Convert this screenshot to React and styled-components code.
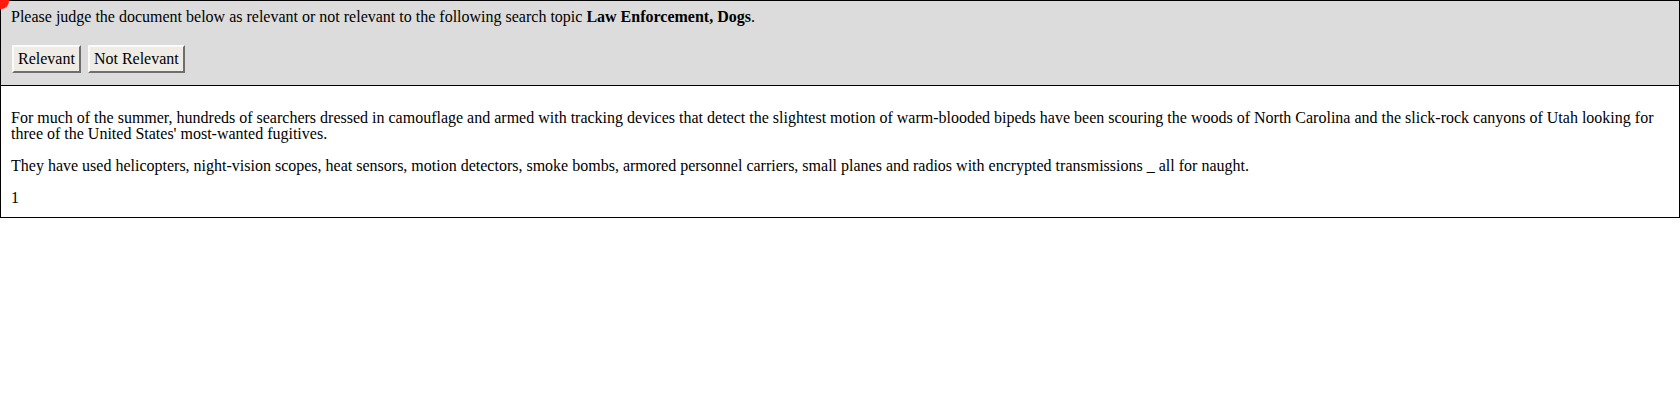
import React from "react";
import styled, { createGlobalStyle } from "styled-components";

const GlobalStyle = createGlobalStyle`
  html, body {
    margin: 0;
    padding: 0;
    background: #ffffff;
  }
  body {
    font-family: "Liberation Serif", "Times New Roman", serif;
    font-size: 16px;
    line-height: 16px;
    color: #000000;
  }
`;

const Frame = styled.div`
  position: relative;
  border: 1px solid #000;
  display: flex;
  flex-direction: column;
`;

const Marker = styled.span`
  position: absolute;
  top: -8px;
  left: -8px;
  width: 16px;
  height: 16px;
  border-radius: 50%;
  background: #ff1a0e;
`;

const Header = styled.div`
  background: #dcdcdc;
  border-bottom: 1px solid #000;
  padding: 8px 10px 12px;
  display: flex;
  flex-direction: column;
  gap: 20px;
`;

const Prompt = styled.p`
  margin: 0;
`;

const Actions = styled.div`
  display: flex;
  gap: 7px;
  padding-left: 1px;
`;

const JudgeButton = styled.button`
  font-family: inherit;
  font-size: 16px;
  line-height: 16px;
  color: #000;
  background: #efece6;
  border: 2px solid;
  border-color: #fbfaf8 #6e6e6e #6e6e6e #fbfaf8;
  padding: 4px ${(p) => p.$pad}px;
  margin: 0;
  cursor: pointer;
`;

const Body = styled.div`
  padding: 24px 10px 11px;
  display: flex;
  flex-direction: column;
  gap: 16px;
`;

const Para = styled.p`
  margin: 0;
`;

const App = () => (
  <>
    <GlobalStyle />
    <Frame>
      <Marker />
      <Header>
        <Prompt>
          Please judge the document below as relevant or not relevant to the
          following search topic <b>Law Enforcement, Dogs</b>.
        </Prompt>
        <Actions>
          <JudgeButton $pad={4}>Relevant</JudgeButton>
          <JudgeButton $pad={4}>Not Relevant</JudgeButton>
        </Actions>
      </Header>
      <Body>
        <Para>
          For much of the summer, hundreds of searchers dressed in camouflage
          and armed with tracking devices that detect the slightest motion of
          warm-blooded bipeds have been scouring the woods of North Carolina
          and the slick-rock canyons of Utah looking for three of the United
          States' most-wanted fugitives.
        </Para>
        <Para>
          They have used helicopters, night-vision scopes, heat sensors, motion
          detectors, smoke bombs, armored personnel carriers, small planes and
          radios with encrypted transmissions _ all for naught.
        </Para>
        <Para>1</Para>
      </Body>
    </Frame>
  </>
);

export default App;
